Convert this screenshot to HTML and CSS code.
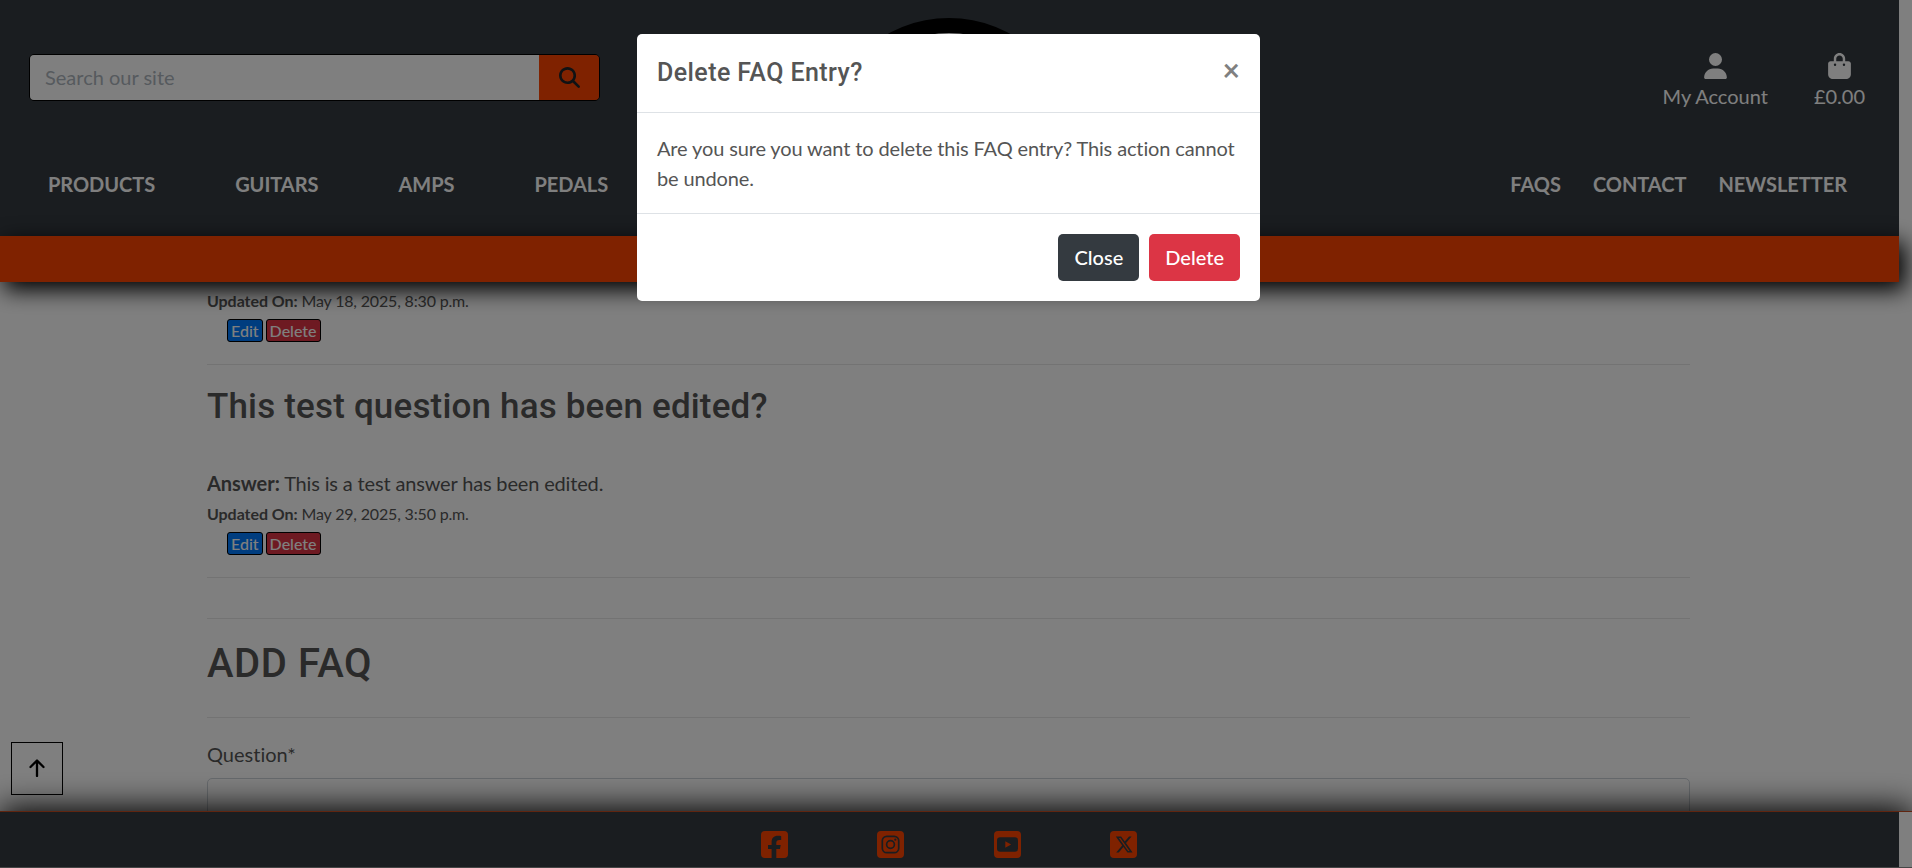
FILE: index.html
```html
<!DOCTYPE html>
<html lang="en">
<head>
<meta charset="utf-8">
<title>FAQs</title>
<link rel="stylesheet" href="styles.css">
</head>
<body>
<div class="page">
  <header class="header">
    <div class="logo"></div>
    <div class="top-row">
      <form class="search">
        <input class="search-input" type="text" placeholder="Search our site">
        <button class="search-button" type="button" aria-label="Search">
          <svg width="21" height="21" viewBox="0 0 512 512"><path d="M416 208c0 45.900-14.900 88.300-40 122.700L502.600 457.400c12.500 12.500 12.500 32.800 0 45.300s-32.800 12.500-45.300 0L330.700 376c-34.400 25.200-76.800 40-122.700 40C93.100 416 0 322.900 0 208S93.100 0 208 0S416 93.100 416 208zM208 352a144 144 0 1 0 0-288 144 144 0 1 0 0 288z"/></svg>
        </button>
      </form>
      <div class="account-links">
        <a class="account-link">
          <svg width="23" height="26" viewBox="0 0 448 512"><path d="M224 256A128 128 0 1 0 224 0a128 128 0 1 0 0 256zm-45.700 48C79.800 304 0 383.800 0 482.300C0 498.700 13.300 512 29.700 512H418.300c16.400 0 29.700-13.300 29.700-29.700C448 383.800 368.200 304 269.700 304H178.300z"/></svg>
          <span>My Account</span>
        </a>
        <a class="account-link">
          <svg width="23" height="26" viewBox="0 0 448 512"><path d="M160 112c0-35.300 28.700-64 64-64s64 28.700 64 64v48H160V112zm-48 48H48c-26.500 0-48 21.500-48 48V416c0 53 43 96 96 96H352c53 0 96-43 96-96V208c0-26.500-21.500-48-48-48H336V112C336 50.100 285.900 0 224 0S112 50.100 112 112v48zm24 48a24 24 0 1 1 0 48 24 24 0 1 1 0-48zm152 24a24 24 0 1 1 48 0 24 24 0 1 1-48 0z"/></svg>
          <span>£0.00</span>
        </a>
      </div>
    </div>
    <nav class="nav">
      <div class="nav-main"><a>PRODUCTS</a><a>GUITARS</a><a>AMPS</a><a>PEDALS</a></div>
      <div class="nav-side"><a>FAQS</a><a>CONTACT</a><a>NEWSLETTER</a></div>
    </nav>
  </header>
  <div class="banner"></div>
  <main class="content">
    <p class="updated"><strong>Updated On:</strong> May 18, 2025, 8:30 p.m.</p>
    <div class="actions"><a class="tag edit">Edit</a><a class="tag delete">Delete</a></div>
    <hr class="rule">
    <h3 class="question">This test question has been edited?</h3>
    <p class="answer"><strong>Answer:</strong> This is a test answer has been edited.</p>
    <p class="updated"><strong>Updated On:</strong> May 29, 2025, 3:50 p.m.</p>
    <div class="actions"><a class="tag edit">Edit</a><a class="tag delete">Delete</a></div>
    <hr class="rule">
    <hr class="rule rule-form">
    <h2 class="form-title">ADD FAQ</h2>
    <hr class="rule rule-title">
    <label class="label">Question*</label>
    <div class="field"></div>
  </main>
  <footer class="footer">
    <div class="socials">
      <svg width="27" height="27" viewBox="0 0 27 27"><path fill-rule="evenodd" d="M4 0H23A4 4 0 0 1 27 4V23A4 4 0 0 1 23 27H15.300V18H19L19.700 14H15.300V12C15.300 9.700 16.200 8.900 18.500 8.900C19.300 8.900 19.900 8.900 20.200 9V5.200C19.600 5 18.100 4.800 17.100 4.800C12.600 4.800 10.600 6.900 10.600 11.500V14H7V18H10.600V27H4A4 4 0 0 1 0 23V4A4 4 0 0 1 4 0Z"/></svg>
      <svg width="27" height="27" viewBox="0 0 27 27"><rect width="27" height="27" rx="4"/><rect class="cut-line" x="5.300" y="5.300" width="16.400" height="16.400" rx="4.500"/><circle class="cut-line" cx="13.500" cy="13.500" r="3.900"/><circle class="cut" cx="18.300" cy="8.700" r="1.100"/></svg>
      <svg width="27" height="27" viewBox="0 0 27 27"><rect width="27" height="27" rx="4"/><rect class="cut" x="3" y="6.200" width="21" height="14.600" rx="3.200"/><path d="M11.300 10.200L17.100 13.500L11.300 16.800Z"/></svg>
      <svg width="27" height="27" viewBox="0 0 512 512"><rect width="512" height="512" rx="76"/><path class="cut" fill-rule="evenodd" d="M361 105h49L304 227 429 407H331L254 304 166 407H117L230 276 110 105H211L280 199ZM344 377H371L197 134H168Z"/></svg>
    </div>
  </footer>
  <a class="to-top"><svg width="16" height="18" viewBox="0 0 16 18"><path d="M8 17V2M1.500 8L8 1.500L14.500 8"/></svg></a>
</div>
<div class="backdrop"></div>
<div class="modal" role="dialog">
  <div class="modal-header"><h5 class="modal-title">Delete FAQ Entry?</h5><button class="modal-x" type="button">×</button></div>
  <div class="modal-body">Are you sure you want to delete this FAQ entry? This action cannot be undone.</div>
  <div class="modal-footer"><button class="btn btn-dark" type="button">Close</button><button class="btn btn-danger" type="button">Delete</button></div>
</div>
</body>
</html>
```
FILE: styles.css
```css
* { box-sizing: border-box; }
body {
  margin: 0;
  height: 868px;
  overflow: hidden;
  background: #fff;
  color: #555;
  font: 20px/30px Lato, sans-serif;
  font-variant-ligatures: none;
}
strong { font-weight: 700; }
.page { position: relative; display: flex; flex-direction: column; height: 868px; overflow: hidden; }

.header { position: relative; flex: none; width: 1899px; height: 236px; background: #343a40; color: #fff; }
.logo {
  position: absolute; left: 822px; top: 18px; width: 254px; height: 254px;
  border: 15px solid #000; border-radius: 50%; background: #fff;
}
.top-row { display: flex; justify-content: space-between; padding: 54px 34px 0 29px; height: 166px; }
.search { display: flex; width: 571px; height: 47px; border: 1px solid #000; border-radius: 5px; overflow: hidden; }
.search-input { flex: 1; min-width: 0; padding: 0 15px 2px; border: 0; background: #fff; font: 20px/30px Lato, sans-serif; }
.search-input::placeholder { color: #adb5bd; opacity: 1; }
.search-button { display: flex; align-items: center; justify-content: center; width: 60px; padding: 0; border: 0; background: #ff4500; fill: #212529; }
.account-links { display: flex; gap: 46px; margin-top: -1px; }
.account-link { display: flex; flex-direction: column; align-items: center; fill: #fff; gap: 2px; }
.nav { display: flex; justify-content: space-between; padding: 3px 52px 0 48px; font-weight: 700; letter-spacing: -.04px; }
.nav-main { display: flex; gap: 80px; }
.nav-side { display: flex; gap: 32px; }

.banner { position: relative; z-index: 2; flex: none; width: 1899px; height: 46px; background: #ff4500; box-shadow: 5px 7px 22px 1px #000; }

.content { flex: 1; min-height: 0; width: 1483px; margin-left: 207px; padding-top: 4px; overflow: hidden; }
.updated { margin: 0; font-size: 16px; line-height: 30px; letter-spacing: -.17px; }
.updated strong, .answer strong { letter-spacing: -.05px; }
.actions { display: flex; gap: 3px; margin: 3px 0 0 20px; }
.tag { height: 23px; padding: 0 3px; border: 1px solid #000; border-radius: 3px; color: #fff; font-size: 16px; font-weight: 500; line-height: 22px; }
.edit { background: #007bff; }
.delete { background: #dc3545; }
.rule { height: 1px; margin: 22px 0 0; border: 0; background: #e6e6e6; }
.question, .form-title, .modal-title { margin: 0; font-family: Roboto, sans-serif; font-weight: 500; }
.question { margin-top: 21px; font-size: 35px; line-height: 42px; letter-spacing: .17px; }
.answer { margin: 40px 0 1px; line-height: 30px; letter-spacing: -.16px; }
.rule-form { margin-top: 40px; }
.form-title { margin-top: 21px; font-size: 40px; line-height: 48px; letter-spacing: .6px; }
.rule-title { margin-top: 29px; }
.label { display: block; margin-top: 21px; line-height: 30px; }
.field { height: 100px; margin-top: 9px; border: 1px solid #ced4da; border-radius: 5px; }

.footer { position: relative; z-index: 3; flex: none; height: 57px; border-top: 1px solid #c04a20; border-bottom: 1px solid #8c8c8c; box-shadow: 0 -3px 32px #000; background: linear-gradient(to right, #343a40 1899px, #fff 1899px); }
.socials { display: flex; justify-content: center; gap: 89.500px; width: 1898px; padding-top: 19px; fill: #ff4500; }
.socials .cut { fill: #343a40; }
.socials .cut-line { fill: none; stroke: #343a40; stroke-width: 1.700; }
.to-top { position: absolute; z-index: 4; left: 11px; top: 742px; display: flex; align-items: center; justify-content: center; width: 52px; height: 53px; padding-bottom: 2px; border: 1px solid #000; }
.to-top path { fill: none; stroke: #000; stroke-width: 2.300; stroke-linecap: round; stroke-linejoin: round; }

.backdrop { position: fixed; z-index: 10; inset: 0; background: rgba(0, 0, 0, .5); }
.modal { position: fixed; z-index: 11; left: 637px; top: 34px; width: 623px; height: 267px; border-radius: 5px; background: #fff; }
.modal-header { display: flex; justify-content: space-between; height: 79px; padding: 20px; border-bottom: 1px solid #dee2e6; }
.modal-title { font-size: 25px; line-height: 37px; letter-spacing: .42px; }
.modal-x { align-self: flex-start; padding: 0; border: 0; background: none; color: #808080; font: 700 30px/30px Lato, sans-serif; }
.modal-body { height: 101px; padding: 20px; border-bottom: 1px solid #dee2e6; letter-spacing: -.13px; }
.modal-footer { display: flex; justify-content: flex-end; gap: 10px; padding: 20px; }
.btn { height: 47px; padding: 0 16px 1px; border: 0; border-radius: 5px; color: #fff; font: 500 20px/30px Lato, sans-serif; }
.btn-dark { background: #343a40; }
.btn-danger { background: #dc3545; }
```
